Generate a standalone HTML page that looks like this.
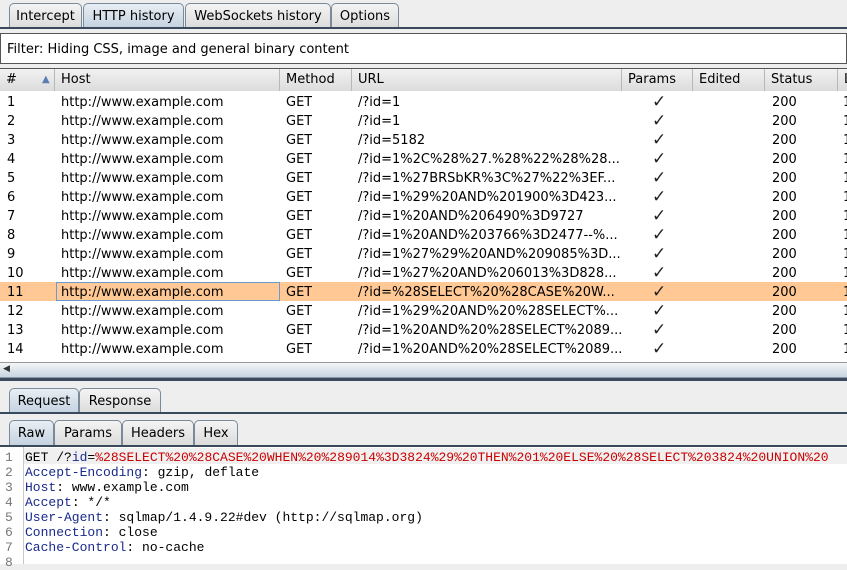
<!DOCTYPE html>
<html><head><meta charset="utf-8"><style>
*{margin:0;padding:0;box-sizing:border-box}
body{width:847px;height:564px;overflow:hidden;background:#eeeeee;font-family:"DejaVu Sans","Liberation Sans",sans-serif;font-size:13px;color:#000;position:relative}
.a{position:absolute;white-space:nowrap}
.tab{position:absolute;height:25px;border:1px solid #7a8a99;border-bottom:none;border-radius:5px 5px 0 0;background:linear-gradient(#f4f4f4,#dcdcdc);padding:5px 0 0 0;text-align:center}
.tab.sel{background:linear-gradient(#e8eef4,#c4d2e0)}
.row{position:absolute;left:0;width:847px;height:19px}
.row span{position:absolute;top:3px;white-space:nowrap;overflow:hidden}
.row span.ck{top:0;font-size:17px;color:#222}
.hd{position:absolute;top:69px;height:22px;border-right:1px solid #b8b8b8;background:linear-gradient(#f2f2f2,#dcdcdc);padding:3px 6px;white-space:nowrap}
.code{position:absolute;left:0;font-family:"Liberation Mono",monospace;font-size:13px;white-space:nowrap;height:15px}
.code .n{position:absolute;left:5px;color:#777}
.code .t{position:absolute;left:25px}
.k{color:#1a2a8c}.r{color:#c00}
</style></head><body>
<div class="tab" style="left:9px;top:3px;width:73px">Intercept</div>
<div class="tab sel" style="left:83px;top:3px;width:101px">HTTP history</div>
<div class="tab" style="left:185px;top:3px;width:146px">WebSockets history</div>
<div class="tab" style="left:331px;top:3px;width:68px">Options</div>
<div class="a" style="left:0;top:27px;width:847px;height:2px;background:#3a4a5c"></div>
<div class="a" style="left:0;top:33px;width:847px;height:31px;background:#fff;border:1px solid #555;padding:8px 6px">Filter: Hiding CSS, image and general binary content</div>
<div class="a" style="left:0;top:68px;width:847px;height:294px;background:#fff;border-top:1px solid #555;overflow:hidden">
<div class="hd" style="left:0;top:0;width:55px">#<span style="position:absolute;left:42px;top:5px;color:#5a7fb0;font-size:10px">▲</span></div>
<div class="hd" style="left:55px;top:0;width:225px">Host</div>
<div class="hd" style="left:280px;top:0;width:72px">Method</div>
<div class="hd" style="left:352px;top:0;width:270px">URL</div>
<div class="hd" style="left:622px;top:0;width:71px">Params</div>
<div class="hd" style="left:693px;top:0;width:72px">Edited</div>
<div class="hd" style="left:765px;top:0;width:73px">Status</div>
<div class="hd" style="left:838px;top:0;width:20px">L</div>
<div id="rows"></div>
</div>
<div class="a" style="left:0;top:362px;width:847px;height:16px;background:linear-gradient(#f4f6f8,#c8d4e0);border-top:1px solid #999;border-bottom:1px solid #8a9aa8"></div>
<div class="a" style="left:3px;top:364px;font-size:9px;color:#333">◀</div>
<div class="a" style="left:0;top:378px;width:847px;height:3px;background:#3a4a5c"></div>
<div class="tab sel" style="left:9px;top:388px;width:70px">Request</div>
<div class="tab" style="left:79px;top:388px;width:82px">Response</div>
<div class="a" style="left:0;top:412px;width:847px;height:2px;background:#3a4a5c"></div>
<div class="tab sel" style="left:9px;top:420px;width:45px">Raw</div>
<div class="tab" style="left:54px;top:420px;width:68px">Params</div>
<div class="tab" style="left:122px;top:420px;width:72px">Headers</div>
<div class="tab" style="left:194px;top:420px;width:44px">Hex</div>
<div class="a" style="left:0;top:445px;width:847px;height:2px;background:#3a4a5c"></div>
<div class="a" style="left:0;top:447px;width:847px;height:117px;background:#fff"></div>
<div class="a" style="left:23px;top:447px;width:1px;height:117px;background:#c8c8c8"></div>
<div class="a" style="left:24px;top:448px;width:823px;height:16px;background:#f0f0f0"></div>
<div class="code" style="top:450px"><span class="n">1</span><span class="t">GET /?<span class="k">id</span>=<span class="r">%28SELECT%20%28CASE%20WHEN%20%289014%3D3824%29%20THEN%201%20ELSE%20%28SELECT%203824%20UNION%20</span></span></div>
<div class="code" style="top:465px"><span class="n">2</span><span class="t"><span class="k">Accept-Encoding</span>: gzip, deflate</span></div>
<div class="code" style="top:480px"><span class="n">3</span><span class="t"><span class="k">Host</span>: www.example.com</span></div>
<div class="code" style="top:495px"><span class="n">4</span><span class="t"><span class="k">Accept</span>: */*</span></div>
<div class="code" style="top:510px"><span class="n">5</span><span class="t"><span class="k">User-Agent</span>: sqlmap/1.4.9.22#dev (http://sqlmap.org)</span></div>
<div class="code" style="top:525px"><span class="n">6</span><span class="t"><span class="k">Connection</span>: close</span></div>
<div class="code" style="top:540px"><span class="n">7</span><span class="t"><span class="k">Cache-Control</span>: no-cache</span></div>
<div class="code" style="top:555px"><span class="n">8</span></div>
<script>
var u=["/?id=1","/?id=1","/?id=5182","/?id=1%2C%28%27.%28%22%28%28...","/?id=1%27BRSbKR%3C%27%22%3EF...","/?id=1%29%20AND%201900%3D423...","/?id=1%20AND%206490%3D9727","/?id=1%20AND%203766%3D2477--%...","/?id=1%27%29%20AND%209085%3D...","/?id=1%27%20AND%206013%3D828...","/?id=%28SELECT%20%28CASE%20W...","/?id=1%29%20AND%20%28SELECT%...","/?id=1%20AND%20%28SELECT%2089...","/?id=1%20AND%20%28SELECT%2089..."];
var h="";
for(var i=0;i<15;i++){var y=23+i*19;var s=i==10;
h+='<div class="row" style="top:'+y+'px;'+(s?'background:#ffc894;':'')+'">'+
'<span style="left:7px">'+(i+1)+'</span>'+
(s?'<div style="position:absolute;left:56px;top:0;width:224px;height:19px;border:1px solid #6a9ad0"></div>':'')+
'<span style="left:61px">http://www.example.com</span><span style="left:286px">GET</span>'+
'<span style="left:358px">'+(u[i]||'')+'</span><span class="ck" style="left:652px">✓</span>'+
'<span style="left:772px">200</span><span style="left:843px">1</span></div>';}
document.getElementById('rows').innerHTML=h;
</script>
</body></html>
